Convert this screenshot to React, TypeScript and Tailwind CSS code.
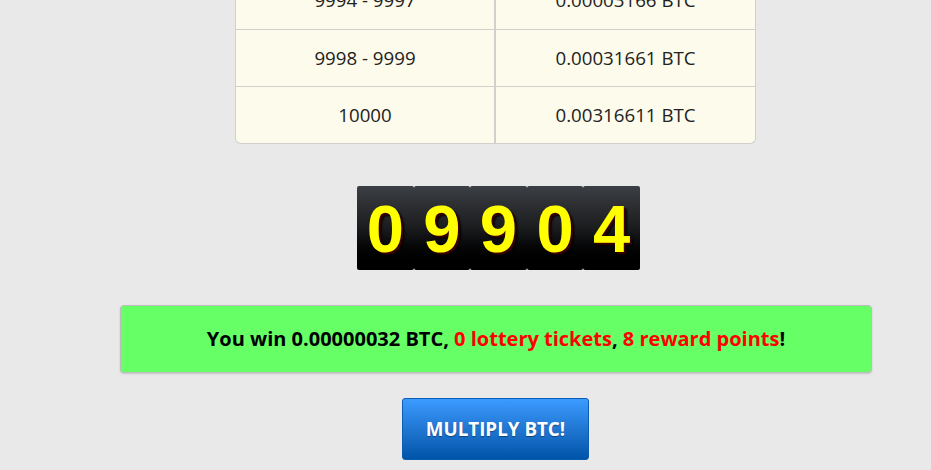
import React from 'react';

const rows = [
  { range: '9994 - 9997', payout: '0.00003166 BTC' },
  { range: '9998 - 9999', payout: '0.00031661 BTC' },
  { range: '10000', payout: '0.00316611 BTC' },
];

const digits = ['0', '9', '9', '0', '4'];

const App: React.FC = () => {
  return (
    <div className="w-[931px] h-[470px] overflow-hidden bg-[#e9e9e9] font-['Open_Sans',sans-serif]">
      <div className="ml-[120px] w-[752px] flex flex-col items-center">
        {/* payout table */}
        <div className="ml-[-1px] -mt-[28px] w-[521px] bg-[#fdfbec] border border-t-0 border-[#d0d0cc] rounded-b-[6px] overflow-hidden">
          {rows.map((r, i) => (
            <div key={r.range} className={`flex h-[57px] ${i > 0 ? 'border-t border-[#d0d0cc]' : 'h-[56px]'}`}>
              <div className="w-[259px] flex items-center justify-center border-r border-[#d0d0cc] text-[18.7px] text-[#222]">
                {r.range}
              </div>
              <div className="flex-1 flex items-center justify-center border-l border-[#d0d0cc] text-[18.7px] text-[#222]">
                {r.payout}
              </div>
            </div>
          ))}
        </div>

        {/* roll counter */}
        <div className="mt-[42px] ml-[5px] flex w-[283px] h-[84px]">
          {digits.map((d, i) => (
            <div
              key={i}
              className="flex-1 flex items-center justify-center rounded-[2px] bg-gradient-to-b from-[#3c3f44] via-[#1b1c1e] to-[#000000]"
            >
              <span className="font-['Liberation_Sans',Arial,sans-serif] font-bold text-[67px] leading-none text-[#ffff00] [text-shadow:2px_2px_0_#3a0000,3px_3px_2px_#000]">
                {d}
              </span>
            </div>
          ))}
        </div>

        {/* result message */}
        <div className="mt-[35px] w-[752px] h-[68px] flex items-center justify-center bg-[#66ff66] border border-[#bdbdbd] rounded-[4px] shadow-[0_1px_2px_rgba(0,0,0,0.15)]">
          <p className="text-[20px] font-bold text-black">
            You win 0.00000032 BTC, <span className="text-[#ff0000]">0 lottery tickets</span>,{' '}
            <span className="text-[#ff0000]">8 reward points</span>!
          </p>
        </div>

        {/* multiply button */}
        <button className="mt-[25px] ml-[-1px] w-[187px] h-[62px] rounded-[3px] border border-[#0b5cb5] bg-gradient-to-b from-[#3b9bff] to-[#0054a8] text-white text-[18.8px] font-bold [text-shadow:0_1px_1px_rgba(0,0,0,0.4)]">
          MULTIPLY BTC!
        </button>
      </div>
    </div>
  );
};

export default App;
